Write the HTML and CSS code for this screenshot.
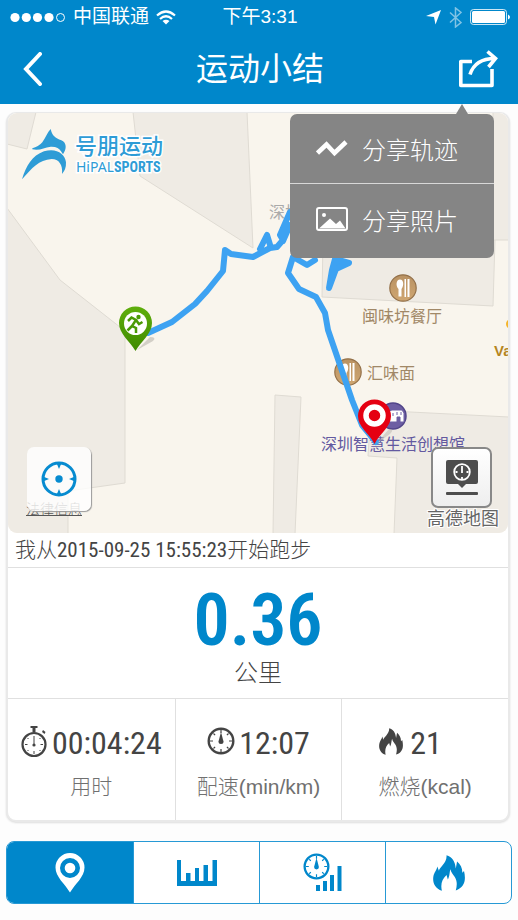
FILE: index.html
```html
<!DOCTYPE html>
<html lang="zh-CN">
<head>
<meta charset="utf-8">
<meta name="viewport" content="width=device-width, initial-scale=1">
<title>运动小结</title>
<link rel="stylesheet" href="styles.css">
</head>
<body>
<svg class="defs" aria-hidden="true">
  <symbol id="flame" viewBox="0 0 97 108">
    <path d="M41 0C58 6 67 17 69 40L73 19C83 28 89 38 89 53L94 48C101 78 95 98 69 107C73 92 74 79 66 66C60 58 55 53 53 43C50 50 51 64 45 74L41 60C28 72 22 88 27 108C4 100-3 80 2 60C5 49 12 44 13 34L18 47C20 35 43 24 41 0Z"/>
  </symbol>
  <symbol id="dial" viewBox="0 0 28 28">
    <circle cx="14" cy="14" r="12.300" fill="none" stroke="currentColor" stroke-width="2.400"/>
    <path d="M14 3v3M14 22v3M3 14h3M22 14h3M6.500 6.500l1.600 1.600M21.500 6.500l-1.600 1.600M6.500 21.500l1.600-1.600M21.500 21.500l-1.600-1.600" stroke="currentColor" stroke-width="1.200"/>
    <path d="M14 5L16.500 14.500A2.500 2.500 0 1 1 11.500 14.500Z"/>
  </symbol>
</svg>

<header class="header">
  <div class="status">
    <div class="status-side">
      <svg class="signal" width="56" height="11" viewBox="0 0 56 11" aria-hidden="true">
        <circle cx="5" cy="5.500" r="4.600"/><circle cx="16.300" cy="5.500" r="4.600"/><circle cx="27.500" cy="5.500" r="4.600"/><circle cx="39" cy="5.500" r="4.600"/>
        <circle cx="50.500" cy="5.500" r="4" fill="none" stroke="#fff"/>
      </svg>
      <span>中国联通</span>
      <svg width="20" height="15" viewBox="0 0 20 15" aria-hidden="true">
        <path d="M1 5.500Q10-2.500 19 5.500M4 9Q10 3.500 16 9" fill="none" stroke="#fff" stroke-width="2.200"/>
        <path d="M6.500 11Q10 8.500 13.500 11L10 14.500Z"/>
      </svg>
    </div>
    <time class="clock">下午3:31</time>
    <div class="status-side status-end">
      <svg width="15" height="15" viewBox="0 0 15 15" aria-hidden="true"><path d="M15 0L9.500 14.500L8 7L0 6Z"/></svg>
      <svg class="dim" width="13" height="21" viewBox="0 0 13 21" aria-hidden="true"><path d="M1 5.500L12 15.500L6.500 20V1L12 5.500L1 15.500" fill="none" stroke="#fff" stroke-width="1.500"/></svg>
      <svg width="40" height="16" viewBox="0 0 40 16" aria-hidden="true"><rect x=".5" y=".5" width="36" height="15" rx="3" fill="none" stroke="#fff" opacity=".8"/><rect x="2" y="2" width="33" height="12" rx="1.500"/><path d="M38 5.500Q40 6.500 40 8T38 10.500Z"/></svg>
    </div>
  </div>
  <div class="nav">
    <button class="icon-button" type="button" aria-label="返回">
      <svg width="20" height="34" viewBox="0 0 20 34"><path d="M18 2L4 17L18 32" fill="none" stroke="#fff" stroke-width="4" stroke-linecap="round"/></svg>
    </button>
    <h1>运动小结</h1>
    <button class="icon-button" type="button" aria-label="分享" aria-expanded="true">
      <svg width="40" height="38" viewBox="0 0 40 38"><g fill="none" stroke="#fff" stroke-width="3.600"><path d="M14 11.500H2.800V35.500H34V19" stroke-linejoin="round"/><path d="M12 24.500C15 15 23 8.500 37 8.500M29.500 1.500L37.500 8.500L30.500 17"/></g></svg>
    </button>
  </div>
  <div class="menu">
    <button type="button">
      <svg width="32" height="18" viewBox="0 0 32 18" aria-hidden="true"><path d="M1.500 13L10.500 4.500L18.500 13L30 2" fill="none" stroke="#fff" stroke-width="4.500"/></svg>
      分享轨迹
    </button>
    <button type="button">
      <svg width="32" height="24" viewBox="0 0 32 24" aria-hidden="true"><rect x="1" y="1" width="30" height="22" rx="2" fill="none" stroke="#fff" stroke-width="2"/><circle cx="8" cy="8" r="2"/><path d="M3 21.500L14 11.500L20 17L24 13.500L29.500 21.500Z"/></svg>
      分享照片
    </button>
  </div>
</header>

<main>
  <section class="card">
    <div class="map">
      <svg class="map-canvas" viewBox="8 113 500 420" preserveAspectRatio="xMidYMid slice">
        <defs>
          <linearGradient id="brown" x1="0" y1="0" x2="0" y2="1"><stop offset="0" stop-color="#b99263"/><stop offset="1" stop-color="#cfa671"/></linearGradient>
          <linearGradient id="green" x1="0" y1="0" x2="0" y2="1"><stop offset="0" stop-color="#5fae0c"/><stop offset="1" stop-color="#3f8a00"/></linearGradient>
          <g id="food">
            <circle r="13.200" fill="url(#brown)" stroke="#94714a" stroke-width="1.200"/>
            <path d="M-3-8.500C-7-8.500-7.500-2-4.500 1V8.500H-1.500V1C1-2 1-8.500-3-8.500ZM1.500-9H3V9H1.500ZM4.500-9H6.500V9H4.500Z" fill="#fff"/>
          </g>
        </defs>
        <rect x="8" y="113" width="500" height="420" fill="#f9f5ed"/>
        <g fill="#efebe4" stroke="#dfdbd3">
          <path d="M7 112H36L27 149L7 144Z"/>
          <path d="M133 112H247L253 248L140 176Z"/>
          <path d="M7 208L60 280L125 331V483L68 491V534H7Z"/>
          <path d="M275 395L301 397L295 534H273Z"/>
          <path d="M371 410L509 417V534H394L397 458L368 456Z"/>
          <path d="M323 240H495L493 306L322 297Z"/>
          <path d="M493 112H509V240H493Z"/>
        </g>
        <g class="poi">
          <text x="269" y="218" class="poi-gray">深圳</text>
          <text x="402" y="322" text-anchor="middle" class="poi-brown">闽味坊餐厅</text>
          <text x="367" y="379" class="poi-brown">汇味面</text>
          <text x="393" y="450" text-anchor="middle" class="poi-purple">深圳智慧生活创想馆</text>
          <text x="494" y="356" class="poi-gold">Va</text>
        </g>
        <circle cx="511" cy="324" r="5" fill="#f5b52a"/>
        <use href="#food" x="403" y="288"/>
        <use href="#food" x="348" y="372"/>
        <circle cx="393" cy="416" r="13" fill="#6d5ea3" stroke="#52458a" stroke-width="1.500"/>
        <path d="M385 412L392 410H402L404 413V422H400V417H397V422H386ZM393 413v3M397 412v3M401 412v3" fill="#fff" stroke="#6d5ea3"/>
        <g fill="none" stroke="#3da2f2" stroke-width="6" stroke-linejoin="round" stroke-linecap="round">
          <path d="M148 333L172 322L195 304L207 291L223 271L225 250L231 254L253 257L270 248L277 247L283 240L280 235L290 212M260 249L267 235L271 248M283 241L290 225"/>
          <path d="M315 260L307 265L293 257L288 273L299 289L316 297L325 313L328 330L340 365L352 400L362 425L376 442"/>
          <path d="M335 259L349 263L336 269L329 288L332 270Z" fill="#3da2f2"/>
        </g>
        <path d="M137 350L153 341Q157 337 150 337Z" fill="#b9b5ad" opacity=".6"/>
        <path d="M135.500 351C130 341 119 334 119 323A16.500 16.500 0 0 1 152 323C152 334 141 341 135.500 351Z" fill="url(#green)"/>
        <circle cx="135.500" cy="323.500" r="11.500" fill="#fff"/>
        <circle cx="138.500" cy="317" r="2.200" fill="#4a9a05"/>
        <path d="M128 321L131.500 317.500L136 320L132 326L136 328V333M136 320L139 324L142.500 322M132 326L127.500 330.500" fill="none" stroke="#4a9a05" stroke-width="2.500"/>
        <path d="M376 444L390 434Q395 429 389 429Z" fill="#b9b5ad" opacity=".5"/>
        <path d="M374.500 444C369 433 358 427 358 416A16.500 16.500 0 0 1 391 416C391 427 380 433 374.500 444Z" fill="#e50012"/>
        <circle cx="374.500" cy="415.500" r="8.500" fill="#e50012" stroke="#fff" stroke-width="5.500"/>
        <g class="brand">
          <g transform="translate(0 105) scale(.3333)" stroke="none">
            <path d="M152 72C142 82 138 96 127 112Q115 126 97 130V133C120 138 132 127 152 125Q176 124 183 139L189 148C201 131 200 113 184 106C166 99 156 92 152 72Z"/>
            <path d="M66 223C78 184 96 152 132 139C168 128 195 145 198 172Q199 193 186 207C189 180 177 162 155 162C116 165 97 188 66 223Z"/>
          </g>
          <text x="75" y="154" class="brand-cn">号朋运动</text>
          <text x="76" y="172" class="brand-en">HiPAL<tspan class="brand-bold">SPORTS</tspan></text>
        </g>
        <text x="427" y="525" class="provider">高德地图</text>
      </svg>
      <a class="legal" href="#legal">法律信息</a>
      <button class="map-button locate" type="button" aria-label="定位">
        <svg width="36" height="36" viewBox="0 0 36 36"><circle cx="18" cy="18" r="16" fill="none" stroke="#078bd0" stroke-width="3"/><circle cx="18" cy="18" r="3.700"/><path d="M15.500 2H20.500L18 8ZM15.500 34H20.500L18 28ZM2 15.500V20.500L8 18ZM34 15.500V20.500L28 18Z"/></svg>
      </button>
      <button class="map-button pace" type="button" aria-label="配速标记">
        <svg width="32" height="36" viewBox="0 0 32 36"><path d="M2 0H30Q32 0 32 2V22Q32 24 30 24H20L16 28L12 24H2Q0 24 0 22V2Q0 0 2 0Z"/><rect y="32" width="32" height="3" rx="1"/><circle cx="16" cy="12" r="7.800" fill="none" stroke="#fff" stroke-width="1.800"/><path d="M16 6V13M16 17v2M9.500 12h2M20.500 12h2" stroke="#fff" stroke-width="1.800"/></svg>
      </button>
    </div>
    <p class="started">我从<time>2015-09-25 15:55:23</time>开始跑步</p>
    <div class="distance">
      <strong>0.36</strong>
      <span>公里</span>
    </div>
    <dl class="stats">
      <div class="stat">
        <dt>用时</dt>
        <dd>
          <svg width="27" height="34" viewBox="0 0 27 34" aria-hidden="true"><circle cx="13" cy="18.500" r="11.500" fill="none" stroke="currentColor" stroke-width="2.200"/><path d="M9.500 0H16.500V2H14.500V6H11.500V2H9.500ZM21 6L22 4L24.500 6L23.500 8Z"/><circle cx="13" cy="19" r="1.600"/><path d="M13 10V19M13 28v-3M4 18.500h2.500M19.500 18.500h2.500M6.500 12l1 1M19.500 12l-1 1M6.500 25l1-1M19.500 25l-1-1" stroke="currentColor"/></svg>
          00:04:24
        </dd>
      </div>
      <div class="stat">
        <dt>配速(min/km)</dt>
        <dd><svg width="28" height="32" aria-hidden="true"><use href="#dial" width="28" height="28"/></svg>12:07</dd>
      </div>
      <div class="stat stat-start">
        <dt>燃烧(kcal)</dt>
        <dd><svg width="24" height="30" aria-hidden="true"><use href="#flame" width="24" height="27"/></svg>21</dd>
      </div>
    </dl>
  </section>

  <nav class="tabs">
    <button class="active" type="button" aria-label="轨迹"><svg width="30" height="40" viewBox="0 0 30 40"><path fill-rule="evenodd" d="M15 0A14.500 14.500 0 0 1 29.500 14.500C29.500 24 20 31 15 39.500C10 31 .5 24 .5 14.500A14.500 14.500 0 0 1 15 0ZM15 5A10 10 0 1 0 15 25A10 10 0 1 0 15 5Z"/><circle cx="15" cy="15" r="5.300"/></svg></button>
    <button type="button" aria-label="统计"><svg width="40" height="26" viewBox="0 0 40 26"><path d="M0 0H4V21H9V13H13.500V21H18V8H22V21H26.500V5H31V21H35.500V0H40V26H0Z"/></svg></button>
    <button type="button" aria-label="配速"><svg width="40" height="40" viewBox="0 0 40 40"><use href="#dial" width="27" height="27"/><path d="M13 32H17V38H13ZM20 28H24V38H20ZM27 22H31V38H27ZM34.500 13H38.500V38H34.500Z"/></svg></button>
    <button type="button" aria-label="燃烧"><svg width="32" height="36"><use href="#flame" width="32" height="36"/></svg></button>
  </nav>
</main>
</body>
</html>
```
FILE: styles.css
```css
:root {
  --blue: #0087cb;
  --line: #e0e0e0;
  --ink: #444;
  --sans: "Liberation Sans", "Noto Sans CJK SC", sans-serif;
  --digits: "Roboto Condensed", Roboto, "Noto Sans CJK SC", sans-serif;
}

* { box-sizing: border-box; }

body {
  margin: 0;
  background: #fdfdfd;
  color: var(--ink);
  font-family: var(--sans);
  font-weight: 300;
}

button {
  border: 0;
  padding: 0;
  background: none;
  color: inherit;
  font: inherit;
}

svg { display: block; fill: currentColor; }
h1, p, dl, dd { margin: 0; }
.defs { position: absolute; width: 0; height: 0; }

/* Header */
.header {
  position: relative;
  z-index: 1;
  background: var(--blue);
  color: #fff;
}

.status {
  display: grid;
  grid-template-columns: 1fr auto 1fr;
  align-items: center;
  height: 34px;
  padding: 0 8px 0 10px;
  font-size: 19px;
  font-weight: 400;
  line-height: 24px;
}

.status-side { display: flex; align-items: center; gap: 7px; }
.status-end { justify-content: flex-end; gap: 8px; }
.dim { opacity: .5; }

.nav {
  display: flex;
  align-items: center;
  justify-content: space-between;
  height: 70px;
  padding: 0 20px 0 22px;
}

.nav h1 {
  font-size: 32px;
  font-weight: 400;
  line-height: 40px;
}

.icon-button { display: flex; width: 40px; }

/* Share menu */
.menu {
  position: absolute;
  top: 114px;
  right: 24px;
  width: 204px;
  padding-bottom: 4px;
  border-radius: 7px;
  background: #858585;
}

.menu::before {
  content: "";
  position: absolute;
  right: 26px;
  bottom: 100%;
  border: 6px solid transparent;
  border-top: 0;
  border-bottom: 10px solid #858585;
}

.menu button {
  display: flex;
  align-items: center;
  gap: 14px;
  width: 100%;
  height: 70px;
  padding-left: 26px;
  font-size: 24px;
}

.menu button:first-child { border-bottom: 1px solid #d8d8d8; }

main { padding: 8px 6px 16px; }

/* Summary card */
.card {
  margin-right: 2px;
  border: 2px solid #e9e9e9;
  border-top-width: 1px;
  border-radius: 10px;
  background: #fff;
  box-shadow: 0 1px 2px #ddd;
}

.map {
  position: relative;
  height: 420px;
  overflow: hidden;
  border-radius: 9px;
}

.map-canvas { width: 100%; height: 100%; }
.poi { font-size: 16px; font-weight: 400; }
.poi-gray { fill: #aaa; }
.poi-brown { fill: #a18867; }
.poi-purple { fill: #6359a0; }
.poi-gold { fill: #b5851f; font-size: 15px; font-weight: 700; }
.brand { fill: #2e9cd6; stroke: #fff; stroke-width: 3px; paint-order: stroke; }
.brand-cn { font-size: 22px; font-weight: 500; }
.brand-en { font-family: "Noto Sans", sans-serif; font-size: 14px; font-weight: 400; }
.brand-bold { font-family: var(--digits); font-weight: 700; }
.provider { fill: #666; stroke: #fff; stroke-width: 2px; paint-order: stroke; font-size: 18px; font-weight: 400; }

.legal {
  position: absolute;
  left: 18px;
  bottom: 14px;
  color: #555;
  font-size: 14px;
  line-height: 20px;
}

.map-button {
  position: absolute;
  display: grid;
  place-items: center;
  border-radius: 7px;
}

.locate {
  left: 19px;
  bottom: 22px;
  width: 64px;
  height: 64px;
  background: rgb(255 255 255 / 80%);
  box-shadow: 1px 1px 1px #999;
  color: #078bd0;
}

.pace {
  right: 16px;
  bottom: 25px;
  width: 61px;
  height: 61px;
  border: 2px solid #888;
  background: linear-gradient(#fff, #eee);
  color: #4d4d4d;
}

.started {
  padding: 0 7px;
  border-bottom: 1px solid var(--line);
  font-size: 21px;
  line-height: 34px;
}

.started time {
  font-family: var(--digits);
  font-weight: 400;
  line-height: 1;
}

.distance {
  display: flex;
  flex-direction: column;
  align-items: center;
  height: 131px;
  padding-top: 18px;
  border-bottom: 1px solid var(--line);
  font-size: 24px;
  line-height: 34px;
}

.distance strong {
  color: var(--blue);
  font-family: var(--digits);
  font-size: 72px;
  font-weight: 600;
  line-height: 70px;
}

.stats {
  display: grid;
  grid-template-columns: repeat(3, 1fr);
}

.stat {
  display: flex;
  flex-direction: column-reverse;
  align-items: center;
  justify-content: flex-end;
  gap: 10px;
  height: 121px;
  padding-top: 26px;
}

.stat + .stat { border-left: 1px solid var(--line); }

.stat dt {
  color: #707070;
  font-size: 21px;
  line-height: 32px;
}

.stat dd {
  display: flex;
  align-items: center;
  gap: 4px;
  font-family: var(--digits);
  font-size: 32px;
  font-weight: 400;
  line-height: 36px;
}

.stat-start dd { width: 92px; gap: 7px; }

/* Chart tabs */
.tabs {
  display: grid;
  grid-template-columns: repeat(4, 1fr);
  height: 63px;
  margin-top: 19px;
  overflow: hidden;
  border: 1px solid #2699d5;
  border-radius: 8px;
  background: #fff;
  color: var(--blue);
}

.tabs button { display: grid; place-items: center; }
.tabs button + button { border-left: 1px solid #2699d5; }
.tabs .active { background: var(--blue); color: #fff; }
```
